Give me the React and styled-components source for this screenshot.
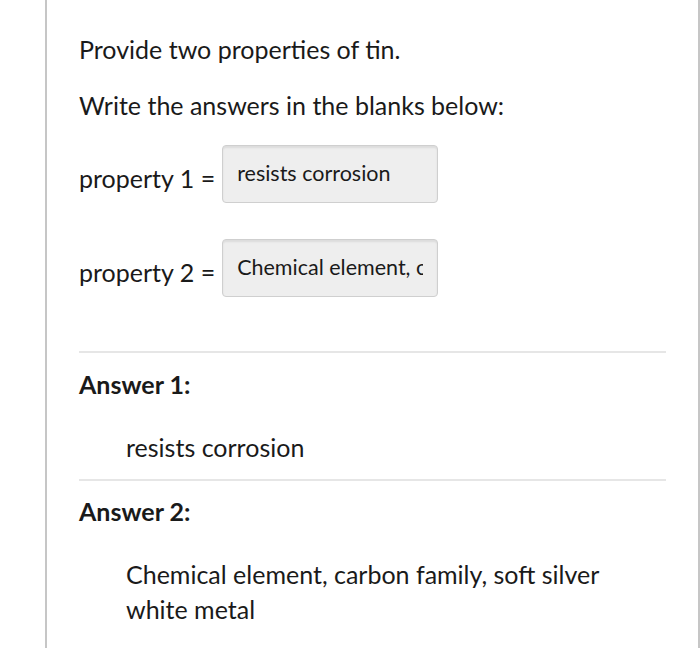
import styled, { createGlobalStyle } from 'styled-components';

const GlobalStyle = createGlobalStyle`
  body {
    margin: 0;
    background: #ffffff;
    font-family: 'Lato', 'Noto Sans', sans-serif;
    color: #1a1a1a;
  }
`;

const Panel = styled.div`
  margin-left: 45px;
  min-height: 648px;
  box-sizing: border-box;
  border-left: 2px solid #c6c6c6;
  border-right: 2px solid #c6c6c6;
  padding: 32px 32px 0 32px;
`;

const Text = styled.p`
  margin: 0 0 ${props => props.gap || 0}px 0;
  font-size: 25px;
  line-height: 34px;
`;

const BlankRow = styled.div`
  display: flex;
  align-items: center;
  gap: 7px;
  font-size: 25px;
  margin-bottom: ${props => props.gap || 0}px;
`;

const Label = styled.span`
  padding-top: 8px;
`;

const Blank = styled.input`
  width: 216px;
  height: 58px;
  box-sizing: border-box;
  padding: 0 14px 2px 14px;
  border: 1px solid #cfcfcf;
  border-radius: 4px;
  background: #eeeeee;
  box-shadow: inset 0 2px 2px rgba(0, 0, 0, 0.08);
  font-family: 'Lato', sans-serif;
  font-size: 21.5px;
  color: #1a1a1a;
  outline: none;
`;

const Divider = styled.hr`
  border: none;
  border-top: 2px solid #e6e6e6;
  margin: 0;
`;

const AnswerBlock = styled.div`
  padding: ${props => props.top}px 0 ${props => props.bottom}px 0;
`;

const AnswerTitle = styled.h3`
  margin: 0 0 ${props => props.gap}px 0;
  font-size: 25px;
  font-weight: 700;
  line-height: 34px;
`;

const AnswerText = styled.p`
  margin: 0 0 0 47px;
  font-size: 25px;
  line-height: 35px;
`;

const App = () => {
  return (
    <>
      <GlobalStyle />
      <Panel>
        <Text gap={22}>Provide two properties of tin.</Text>
        <Text gap={23}>Write the answers in the blanks below:</Text>
        <BlankRow gap={36}>
          <Label>property 1 =</Label>
          <Blank readOnly value="resists corrosion" />
        </BlankRow>
        <BlankRow gap={54}>
          <Label>property 2 =</Label>
          <Blank readOnly value="Chemical element, carbon family, soft silver white metal" />
        </BlankRow>
        <Divider />
        <AnswerBlock top={14} bottom={14}>
          <AnswerTitle gap={29}>Answer 1:</AnswerTitle>
          <AnswerText>resists corrosion</AnswerText>
        </AnswerBlock>
        <Divider />
        <AnswerBlock top={13} bottom={20}>
          <AnswerTitle gap={29}>Answer 2:</AnswerTitle>
          <AnswerText>Chemical element, carbon family, soft silver<br />white metal</AnswerText>
        </AnswerBlock>
      </Panel>
    </>
  );
};

export default App;
